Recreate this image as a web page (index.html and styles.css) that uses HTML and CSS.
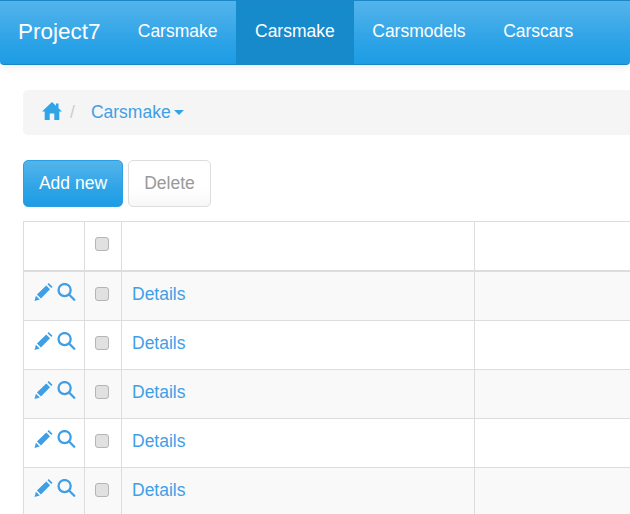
FILE: index.html
```html
<!DOCTYPE html>
<html lang="en">
<head>
<meta charset="utf-8">
<title>Carsmake</title>
<link rel="stylesheet" href="styles.css">
</head>
<body>
<nav class="navbar">
  <a class="brand" href="#">Project7</a>
  <a class="nav-link" href="#">Carsmake</a>
  <a class="nav-link active" href="#">Carsmake</a>
  <a class="nav-link" href="#">Carsmodels</a>
  <a class="nav-link" href="#">Carscars</a>
</nav>
<main class="page">
  <div class="breadcrumb">
    <svg class="home" viewBox="0 0 20 18"><path d="M10 0 L14 3.8 V1.5 H16.5 V6.2 L20 9.6 H17.3 V18 H12.3 V11.5 H7.7 V18 H2.7 V9.6 H0 Z"/></svg>
    <span class="sep">/</span>
    <a class="crumb" href="#">Carsmake<span class="caret"></span></a>
  </div>
  <div class="actions">
    <button class="btn btn-primary">Add new</button>
    <button class="btn btn-default">Delete</button>
  </div>
  <table class="grid">
    <colgroup><col class="c1"><col class="c2"><col class="c3"><col class="c4"></colgroup>
    <thead>
      <tr><th></th><th class="check"><input type="checkbox"></th><th></th><th></th></tr>
    </thead>
    <tbody>
      <tr><td class="tools"><svg class="pencil" viewBox="0 0 19 19"><path d="M0 19 L1.5 13.4 L5.6 17.5 Z M2.6 12.2 L12.4 2.6 L16.4 6.6 L6.8 16.4 Z M13.7 1.3 L15 0 L19 4 L17.7 5.3 Z"/></svg><svg class="search" viewBox="0 0 19 19"><circle cx="7.5" cy="7.5" r="6.4"/><path d="M12.2 12.2 L17.7 17.7"/></svg></td><td class="check"><input type="checkbox"></td><td class="link"><a href="#">Details</a></td><td></td></tr>
      <tr><td class="tools"><svg class="pencil" viewBox="0 0 19 19"><path d="M0 19 L1.5 13.4 L5.6 17.5 Z M2.6 12.2 L12.4 2.6 L16.4 6.6 L6.8 16.4 Z M13.7 1.3 L15 0 L19 4 L17.7 5.3 Z"/></svg><svg class="search" viewBox="0 0 19 19"><circle cx="7.5" cy="7.5" r="6.4"/><path d="M12.2 12.2 L17.7 17.7"/></svg></td><td class="check"><input type="checkbox"></td><td class="link"><a href="#">Details</a></td><td></td></tr>
      <tr><td class="tools"><svg class="pencil" viewBox="0 0 19 19"><path d="M0 19 L1.5 13.4 L5.6 17.5 Z M2.6 12.2 L12.4 2.6 L16.4 6.6 L6.8 16.4 Z M13.7 1.3 L15 0 L19 4 L17.7 5.3 Z"/></svg><svg class="search" viewBox="0 0 19 19"><circle cx="7.5" cy="7.5" r="6.4"/><path d="M12.2 12.2 L17.7 17.7"/></svg></td><td class="check"><input type="checkbox"></td><td class="link"><a href="#">Details</a></td><td></td></tr>
      <tr><td class="tools"><svg class="pencil" viewBox="0 0 19 19"><path d="M0 19 L1.5 13.4 L5.6 17.5 Z M2.6 12.2 L12.4 2.6 L16.4 6.6 L6.8 16.4 Z M13.7 1.3 L15 0 L19 4 L17.7 5.3 Z"/></svg><svg class="search" viewBox="0 0 19 19"><circle cx="7.5" cy="7.5" r="6.4"/><path d="M12.2 12.2 L17.7 17.7"/></svg></td><td class="check"><input type="checkbox"></td><td class="link"><a href="#">Details</a></td><td></td></tr>
      <tr><td class="tools"><svg class="pencil" viewBox="0 0 19 19"><path d="M0 19 L1.5 13.4 L5.6 17.5 Z M2.6 12.2 L12.4 2.6 L16.4 6.6 L6.8 16.4 Z M13.7 1.3 L15 0 L19 4 L17.7 5.3 Z"/></svg><svg class="search" viewBox="0 0 19 19"><circle cx="7.5" cy="7.5" r="6.4"/><path d="M12.2 12.2 L17.7 17.7"/></svg></td><td class="check"><input type="checkbox"></td><td class="link"><a href="#">Details</a></td><td></td></tr>
    </tbody>
  </table>
</main>
</body>
</html>
```
FILE: styles.css
```css
* { box-sizing: border-box; }
html, body { height: 100%; overflow: hidden; }
body {
  margin: 0;
  background: #fff;
  color: #555;
  font-family: "Liberation Sans", Arial, sans-serif;
  font-size: 17.5px;
  line-height: 25px;
}
a { color: #3f9fe6; text-decoration: none; }
.navbar {
  display: flex;
  align-items: stretch;
  height: 65px;
  border: 1px solid #1a87c9;
  border-width: 1px 0;
  border-radius: 0 0 4px 4px;
  background: linear-gradient(#54b4eb, #2fa4e7 60%, #1d9ce5);
  box-shadow: 0 1px 10px rgba(0, 0, 0, .1);
}
.brand {
  display: flex;
  align-items: center;
  width: 119px;
  padding: 0 0 2px 18px;
  color: #fff;
  font-size: 22.5px;
}
.nav-link {
  display: flex;
  align-items: center;
  padding: 0 18.75px 2px;
  color: #fff;
}
.nav-link.active { background: #178acc; }
.page { width: 760px; padding: 25px 0 0 23px; }
.breadcrumb {
  display: flex;
  align-items: center;
  height: 45px;
  padding-left: 19px;
  background: #f5f5f5;
  border-radius: 5px;
}
.home { width: 20px; height: 18px; fill: #2fa4e7; margin-bottom: 3px; }
.sep { margin-left: 8px; color: #ccc; }
.crumb { display: flex; align-items: center; margin-left: 16px; }
.caret {
  margin-left: 3px;
  border: 5px solid transparent;
  border-top-color: #2fa4e7;
  border-bottom-width: 0;
}
.actions { display: flex; gap: 5px; margin-top: 25px; }
.btn {
  height: 47px;
  border-radius: 5px;
  font: inherit;
}
.btn-primary {
  width: 100px;
  padding: 0;
  color: #fff;
  border: 1px solid #2a9fe3;
  background: linear-gradient(#54b4eb, #2fa4e7 60%, #1d9ce5);
}
.btn-default {
  width: 83px;
  padding: 0;
  color: #999;
  border: 1px solid #ddd;
  background: linear-gradient(#fff, #fff 60%, #f7f7f7);
}
.grid {
  table-layout: fixed;
  width: 700px;
  margin-top: 14px;
  border-collapse: collapse;
}
.c1 { width: 61px; }
.c2 { width: 37px; }
.c3 { width: 353px; }
.grid th, .grid td {
  height: 49px;
  padding: 0 10px;
  border: 1px solid #ddd;
  font-weight: normal;
  vertical-align: middle;
}
.grid th { border-bottom-width: 2px; }
.grid tbody tr:first-child td { height: 50px; }
.grid tbody tr { background: #f9f9f9; }
.grid tbody tr:nth-child(even) { background: #fff; }
.grid .link { padding-bottom: 3px; }
.grid th.check { padding: 0 2px 4px 0; }
.grid .check { padding: 0 2px 4px 0; text-align: center; line-height: 0; }
.grid .tools { padding: 11px 0 0 10px; line-height: 0; white-space: nowrap; vertical-align: top; }
input[type="checkbox"] {
  appearance: none;
  display: inline-block;
  width: 14px;
  height: 14px;
  margin: 0;
  border: 1px solid #b5b5b5;
  border-radius: 3px;
  background: #e1e1e1;
}
.pencil { width: 19px; height: 18px; fill: #3f9fe6; vertical-align: top; }
.search {
  width: 19px;
  height: 18px;
  margin-left: 3.5px;
  vertical-align: top;
  fill: none;
  stroke: #3f9fe6;
  stroke-width: 2.4;
  stroke-linecap: round;
}
```
